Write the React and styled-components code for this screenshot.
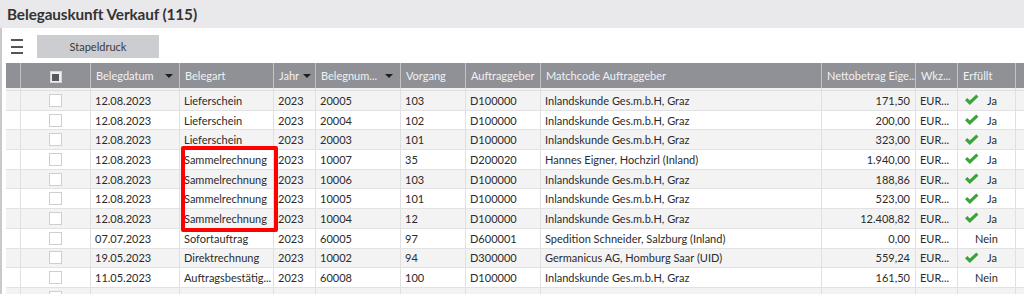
import React from 'react'
import styled, { createGlobalStyle } from 'styled-components'

const Global = createGlobalStyle`
  html, body { margin: 0; padding: 0; background: #fff; }
  body { font-family: Lato, "Open Sans", Arial, sans-serif; }
`

const COLS = '15px 70px 89px 94px 42px 85px 65px 75px 281px 94px 42px 58px 80px'

const Page = styled.div`
  width: 1024px;
  height: 294px;
  overflow: hidden;
  display: flex;
  flex-direction: column;
`

const TitleBar = styled.div`
  height: 28px;
  background: #e9e9eb;
  display: flex;
  align-items: center;
  padding-left: 7px;
  font-size: 15.3px;
  font-weight: 700;
  letter-spacing: -0.1px;
  color: #333;
  flex-shrink: 0;
`

const Panel = styled.div`
  flex: 1;
  border-left: 2px solid #c9c9cb;
  padding-left: 4px;
  display: flex;
  flex-direction: column;
  min-width: 0;
`

const Toolbar = styled.div`
  height: 35px;
  display: flex;
  align-items: center;
  gap: 14px;
  padding-left: 5px;
  flex-shrink: 0;
`

const Burger = styled.div`
  width: 12px;
  display: flex;
  flex-direction: column;
  gap: 4.5px;
  margin-top: 2px;
  span {
    height: 2px;
    background: #555;
    display: block;
  }
`

const Button = styled.div`
  width: 122px;
  height: 23px;
  margin-top: 1px;
  background: #cbcdd1;
  color: #3a3a3a;
  font-size: 11px;
  display: flex;
  align-items: center;
  justify-content: center;
`

const Grid = styled.div`
  position: relative;
  width: 1100px;
`

const HeaderRow = styled.div`
  display: grid;
  grid-template-columns: ${COLS};
  height: 25px;
  background: #8f9197;
`

const HeadCell = styled.div`
  border-right: 1px solid #c3c4c7;
  color: #f2f2f2;
  font-size: 11px;
  display: flex;
  align-items: center;
  justify-content: ${p => (p.$center ? 'center' : 'space-between')};
  padding: 0 ${p => (p.$center ? 0 : 5)}px 0 ${p => (p.$center ? 0 : 5)}px;
  white-space: nowrap;
  overflow: hidden;
  box-sizing: border-box;
`

const Arrow = styled.span`
  width: 0;
  height: 0;
  border-left: 4px solid transparent;
  border-right: 4px solid transparent;
  border-top: 4px solid #1e1e1e;
  margin-left: 4px;
  margin-right: ${p => p.$mr || 0}px;
`

const HeadBox = styled.div`
  width: 12px;
  height: 12px;
  box-sizing: border-box;
  border: 1px solid #d6d6d6;
  background: #eee;
  display: flex;
  align-items: center;
  justify-content: center;
  margin-top: 3px;
  &::after {
    content: '';
    width: 7px;
    height: 7px;
    background: #55585c;
  }
`

const Strip = styled.div`
  display: grid;
  grid-template-columns: ${COLS};
  height: 3px;
  background: #f2f2f2;
  border-bottom: 1px solid #e0e0e0;
  box-sizing: border-box;
  & > div { border-right: 1px solid #dedede; }
`

const Row = styled.div`
  display: grid;
  grid-template-columns: ${COLS};
  height: 19.7px;
  box-sizing: border-box;
  background: ${p => (p.$odd ? '#f3f3f3' : '#ffffff')};
  border-bottom: 1px solid #e2e2e2;
`

const Cell = styled.div`
  border-right: 1px solid #e0e0e0;
  font-size: 11px;
  color: #2b2b2b;
  display: flex;
  align-items: center;
  justify-content: ${p => p.$align || 'flex-start'};
  padding: 0 ${p => (p.$align === 'flex-end' ? 5 : 0)}px 0 ${p => (p.$align ? 0 : 4)}px;
  white-space: nowrap;
  overflow: hidden;
  box-sizing: border-box;
`

const Box = styled.div`
  width: 13px;
  height: 13px;
  box-sizing: border-box;
  border: 1px solid #cfcfcf;
  background: #fff;
`

const Done = styled.div`
  display: flex;
  align-items: center;
  gap: 8px;
  padding-left: 2px;
`

const Highlight = styled.div`
  position: absolute;
  left: 175px;
  top: 83px;
  width: 97px;
  height: 86px;
  box-sizing: border-box;
  border: 4.5px solid #ff0000;
  border-radius: 2px;
  pointer-events: none;
`

const Check = () => (
  <svg width="15" height="12" viewBox="0 0 15 12">
    <path d="M1 6.2 L3.3 4.1 L5.8 6.6 L12.3 0.6 L14.4 2.7 L5.8 11 Z" fill="#3aa43a" />
  </svg>
)

const rows = [
  ['12.08.2023', 'Lieferschein', '2023', '20005', '103', 'D100000', 'Inlandskunde Ges.m.b.H, Graz', '171,50', true],
  ['12.08.2023', 'Lieferschein', '2023', '20004', '102', 'D100000', 'Inlandskunde Ges.m.b.H, Graz', '200,00', true],
  ['12.08.2023', 'Lieferschein', '2023', '20003', '101', 'D100000', 'Inlandskunde Ges.m.b.H, Graz', '323,00', true],
  ['12.08.2023', 'Sammelrechnung', '2023', '10007', '35', 'D200020', 'Hannes Eigner, Hochzirl (Inland)', '1.940,00', true],
  ['12.08.2023', 'Sammelrechnung', '2023', '10006', '103', 'D100000', 'Inlandskunde Ges.m.b.H, Graz', '188,86', true],
  ['12.08.2023', 'Sammelrechnung', '2023', '10005', '101', 'D100000', 'Inlandskunde Ges.m.b.H, Graz', '523,00', true],
  ['12.08.2023', 'Sammelrechnung', '2023', '10004', '12', 'D100000', 'Inlandskunde Ges.m.b.H, Graz', '12.408,82', true],
  ['07.07.2023', 'Sofortauftrag', '2023', '60005', '97', 'D600001', 'Spedition Schneider, Salzburg (Inland)', '0,00', false],
  ['19.05.2023', 'Direktrechnung', '2023', '10002', '94', 'D300000', 'Germanicus AG, Homburg Saar (UID)', '559,24', true],
  ['11.05.2023', 'Auftragsbestätig...', '2023', '60008', '100', 'D100000', 'Inlandskunde Ges.m.b.H, Graz', '161,50', false],
  ['', '', '', '', '', '', '', '', null],
]

const App = () => {
  return (
    <Page>
      <Global />
      <TitleBar>Belegauskunft Verkauf (115)</TitleBar>
      <Panel>
        <Toolbar>
          <Burger><span /><span /><span /></Burger>
          <Button>Stapeldruck</Button>
        </Toolbar>
        <Grid>
          <HeaderRow>
            <HeadCell />
            <HeadCell $center><HeadBox /></HeadCell>
            <HeadCell>Belegdatum<Arrow $mr={1} /></HeadCell>
            <HeadCell>Belegart</HeadCell>
            <HeadCell>Jahr<Arrow /></HeadCell>
            <HeadCell>Belegnum...<Arrow $mr={2} /></HeadCell>
            <HeadCell>Vorgang</HeadCell>
            <HeadCell>Auftraggeber</HeadCell>
            <HeadCell>Matchcode Auftraggeber</HeadCell>
            <HeadCell>Nettobetrag Eige...</HeadCell>
            <HeadCell>Wkz...</HeadCell>
            <HeadCell>Erfüllt</HeadCell>
            <HeadCell />
          </HeaderRow>
          <Strip>
            {Array.from({ length: 13 }).map((_, i) => <div key={i} />)}
          </Strip>
          {rows.map((r, i) => (
            <Row key={i} $odd={i % 2 === 0}>
              <Cell />
              <Cell $align="center"><Box /></Cell>
              <Cell>{r[0]}</Cell>
              <Cell>{r[1]}</Cell>
              <Cell>{r[2]}</Cell>
              <Cell>{r[3]}</Cell>
              <Cell>{r[4]}</Cell>
              <Cell>{r[5]}</Cell>
              <Cell>{r[6]}</Cell>
              <Cell $align="flex-end">{r[7]}</Cell>
              <Cell>{r[8] === null ? '' : 'EUR...'}</Cell>
              {r[8] === true ? (
                <Cell><Done><Check />Ja</Done></Cell>
              ) : (
                <Cell $align="center">{r[8] === false ? 'Nein' : ''}</Cell>
              )}
              <Cell />
            </Row>
          ))}
          <Highlight />
        </Grid>
      </Panel>
    </Page>
  )
}

export default App
